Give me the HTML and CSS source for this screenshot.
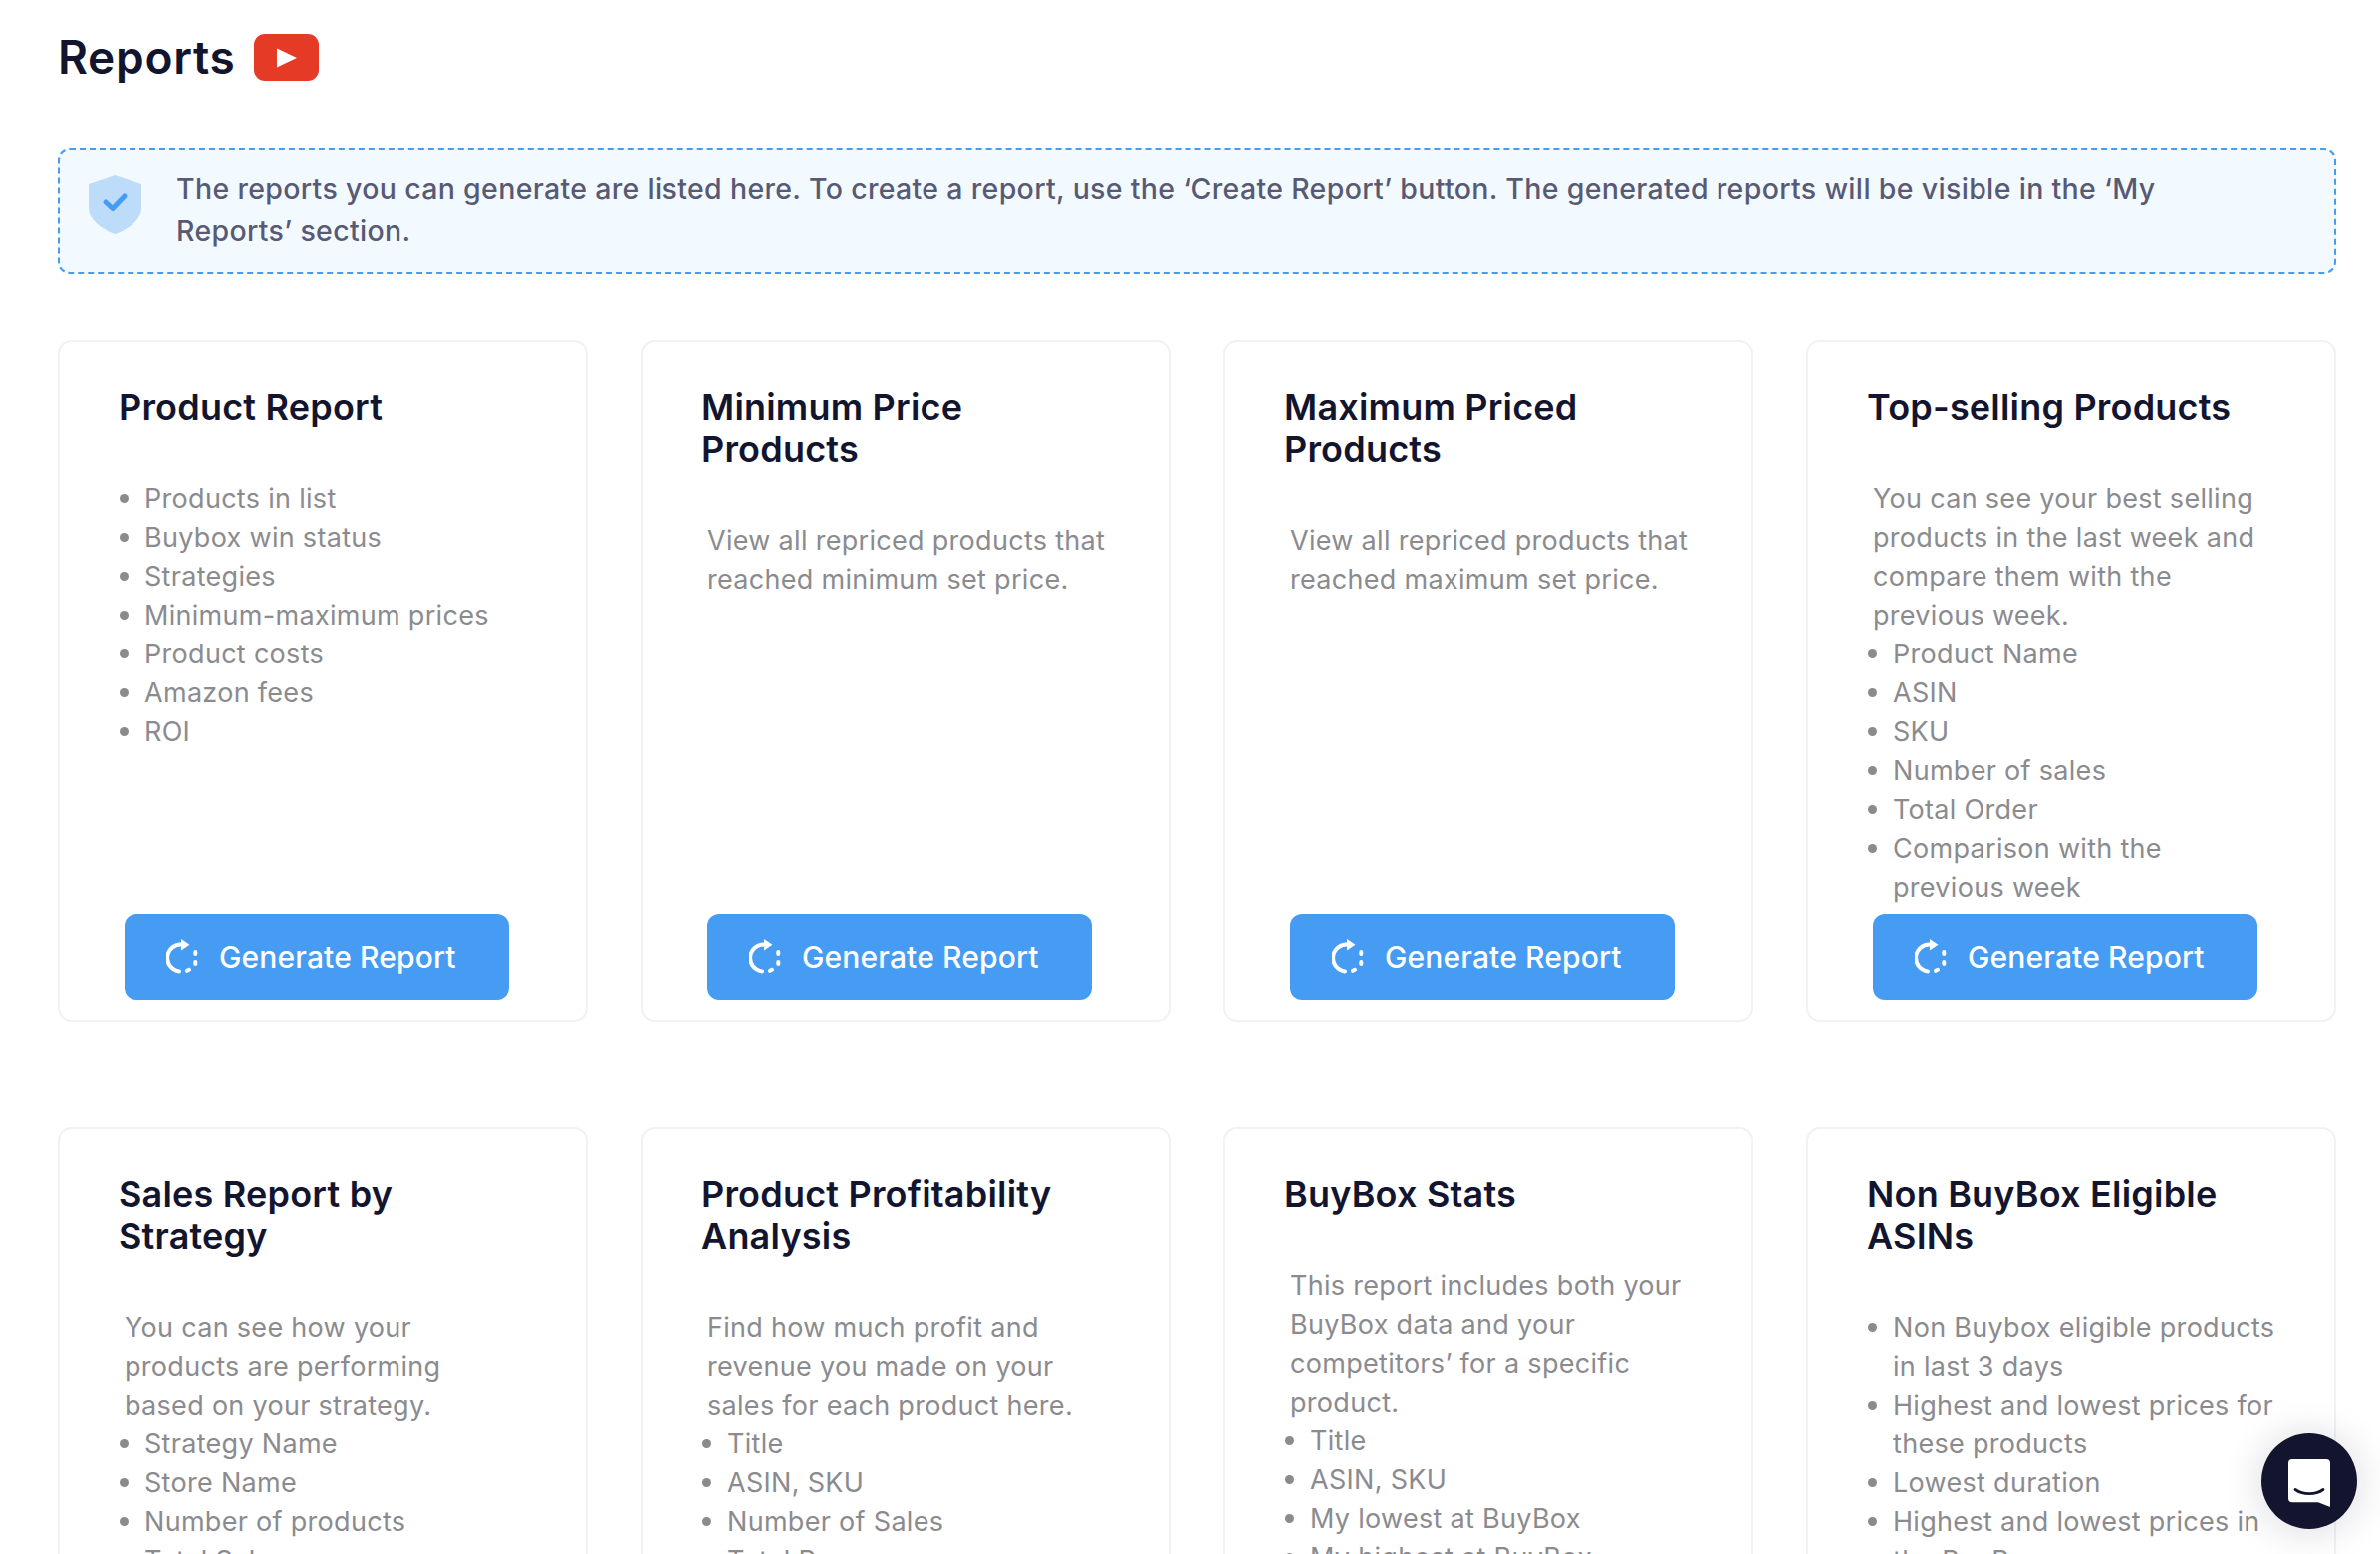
FILE: index.html
```html
<!DOCTYPE html>
<html lang="en">
<head>
<meta charset="utf-8">
<title>Reports</title>
<link rel="stylesheet" href="styles.css">
</head>
<body>
<main class="page">
  <header class="page-head">
    <h1 class="page-title">Reports</h1>
    <svg class="video-icon" viewBox="0 0 65 47" aria-hidden="true"><rect width="65" height="47" rx="11" fill="#e43a26"/><path d="M23 14.500V33.500L43 24Z" fill="#fff"/></svg>
  </header>
  <section class="notice">
    <svg class="notice-icon" viewBox="0 0 53 59" aria-hidden="true"><path d="M26.500 0L53 9V33C53 45 38 55 26.500 59C15 55 0 45 0 33V9Z" fill="#bddcfa"/><path d="M17 27L24 33.500L36 21" fill="none" stroke="#469cf2" stroke-width="5" stroke-linecap="round" stroke-linejoin="round"/></svg>
    <p class="notice-text">The reports you can generate are listed here. To create a report, use the ‘Create Report’ button. The generated reports will be visible in the ‘My<br>Reports’ section.</p>
  </section>
  <section class="grid">
    <article class="card">
      <h2 class="card-title">Product Report</h2>
      <ul class="points">
        <li>Products in list</li><li>Buybox win status</li><li>Strategies</li><li>Minimum-maximum prices</li><li>Product costs</li><li>Amazon fees</li><li>ROI</li>
      </ul>
      <button class="generate"><svg class="generate-icon" viewBox="0 0 32 36" aria-hidden="true"><path d="M15 5.500A13.500 13.500 0 0 0 13 32.400" fill="none" stroke="#fff" stroke-width="4" stroke-linecap="round"/><path d="M15 0L23.500 5.700L15 11.500Z" fill="#fff"/><path d="M29.300 13V15M29.300 23V25M21 31.800L23 30.800" fill="none" stroke="#fff" stroke-width="4" stroke-linecap="round"/></svg>Generate Report</button>
    </article>
    <article class="card">
      <h2 class="card-title">Minimum Price<br>Products</h2>
      <p class="desc">View all repriced products that<br>reached minimum set price.</p>
      <button class="generate"><svg class="generate-icon" viewBox="0 0 32 36" aria-hidden="true"><path d="M15 5.500A13.500 13.500 0 0 0 13 32.400" fill="none" stroke="#fff" stroke-width="4" stroke-linecap="round"/><path d="M15 0L23.500 5.700L15 11.500Z" fill="#fff"/><path d="M29.300 13V15M29.300 23V25M21 31.800L23 30.800" fill="none" stroke="#fff" stroke-width="4" stroke-linecap="round"/></svg>Generate Report</button>
    </article>
    <article class="card">
      <h2 class="card-title">Maximum Priced<br>Products</h2>
      <p class="desc">View all repriced products that<br>reached maximum set price.</p>
      <button class="generate"><svg class="generate-icon" viewBox="0 0 32 36" aria-hidden="true"><path d="M15 5.500A13.500 13.500 0 0 0 13 32.400" fill="none" stroke="#fff" stroke-width="4" stroke-linecap="round"/><path d="M15 0L23.500 5.700L15 11.500Z" fill="#fff"/><path d="M29.300 13V15M29.300 23V25M21 31.800L23 30.800" fill="none" stroke="#fff" stroke-width="4" stroke-linecap="round"/></svg>Generate Report</button>
    </article>
    <article class="card">
      <h2 class="card-title">Top-selling Products</h2>
      <p class="desc">You can see your best selling<br>products in the last week and<br>compare them with the<br>previous week.</p>
      <ul class="points">
        <li>Product Name</li><li>ASIN</li><li>SKU</li><li>Number of sales</li><li>Total Order</li><li>Comparison with the<br>previous week</li>
      </ul>
      <button class="generate"><svg class="generate-icon" viewBox="0 0 32 36" aria-hidden="true"><path d="M15 5.500A13.500 13.500 0 0 0 13 32.400" fill="none" stroke="#fff" stroke-width="4" stroke-linecap="round"/><path d="M15 0L23.500 5.700L15 11.500Z" fill="#fff"/><path d="M29.300 13V15M29.300 23V25M21 31.800L23 30.800" fill="none" stroke="#fff" stroke-width="4" stroke-linecap="round"/></svg>Generate Report</button>
    </article>
    <article class="card">
      <h2 class="card-title">Sales Report by<br>Strategy</h2>
      <p class="desc">You can see how your<br>products are performing<br>based on your strategy.</p>
      <ul class="points">
        <li>Strategy Name</li><li>Store Name</li><li>Number of products</li><li>Total Sales</li>
      </ul>
    </article>
    <article class="card">
      <h2 class="card-title">Product Profitability<br>Analysis</h2>
      <p class="desc">Find how much profit and<br>revenue you made on your<br>sales for each product here.</p>
      <ul class="points">
        <li>Title</li><li>ASIN, SKU</li><li>Number of Sales</li><li>Total Revenue</li>
      </ul>
    </article>
    <article class="card">
      <h2 class="card-title">BuyBox Stats</h2>
      <p class="desc">This report includes both your<br>BuyBox data and your<br>competitors’ for a specific<br>product.</p>
      <ul class="points">
        <li>Title</li><li>ASIN, SKU</li><li>My lowest at BuyBox</li><li>My highest at BuyBox</li>
      </ul>
    </article>
    <article class="card">
      <h2 class="card-title">Non BuyBox Eligible<br>ASINs</h2>
      <ul class="points">
        <li>Non Buybox eligible products<br>in last 3 days</li><li>Highest and lowest prices for<br>these products</li><li>Lowest duration</li><li>Highest and lowest prices in<br>the BuyBox</li>
      </ul>
    </article>
  </section>
</main>
<button class="chat" aria-label="Open chat"><svg class="chat-icon" viewBox="0 0 42 48" aria-hidden="true"><path d="M4 0H38A4 4 0 0 1 42 4V48L30 43.300H4A4 4 0 0 1 0 39.300V4A4 4 0 0 1 4 0Z" fill="#fff"/><path d="M7 30.500C15 36 27 36 35 30.500" fill="none" stroke="#13152f" stroke-width="2.800" stroke-linecap="round"/></svg></button>
</body>
</html>
```
FILE: styles.css
```css
* { box-sizing: border-box; }
html, body { margin: 0; height: 1560px; overflow: hidden; background: #fff; }
body { font-family: Inter, "Liberation Sans", sans-serif; color: #13152f; }
.page { padding: 33px 44px 0 58px; }
.page-head { display: flex; align-items: center; gap: 19px; height: 48px; }
.page-title { margin: 0; font-size: 46px; line-height: 48px; font-weight: 600; letter-spacing: 0.7px; }
.video-icon { width: 65px; height: 47px; flex: none; }
.notice { display: flex; align-items: flex-start; gap: 35px; margin-top: 68px; height: 126px; padding: 18px 30px 19px 29px; background: #f3faff; border: 2px dashed #469cf2; border-radius: 12px; }
.notice-icon { width: 53px; height: 59px; flex: none; margin-top: 7px; }
.notice-text { margin: 0; font-size: 28.500px; line-height: 42px; font-weight: 500; letter-spacing: 0.33px; color: #585a75; white-space: nowrap; }
.grid { display: grid; grid-template-columns: repeat(4, 532px); column-gap: 53px; row-gap: 105px; margin-top: 66px; }
.card { display: flex; flex-direction: column; padding: 45px 22px 20px 59px; background: #fff; border: 2px solid #f1f1f6; border-radius: 14px; }
.card-title { margin: 0 0 51px; font-size: 36px; line-height: 42px; font-weight: 600; letter-spacing: 0.2px; white-space: nowrap; }
.desc { margin: 0 0 0 6px; font-size: 27px; line-height: 39px; letter-spacing: 0.3px; color: #8b8b8f; white-space: nowrap; }
.points { margin: 0 0 8px; padding: 0; list-style: none; font-size: 27px; line-height: 39px; letter-spacing: 0.3px; color: #8b8b8f; white-space: nowrap; }
.points li { position: relative; padding-left: 26px; }
.points li::before { content: ""; position: absolute; left: 1px; top: 15px; width: 9px; height: 9px; border-radius: 50%; background: #8b8b8f; }
.generate { display: flex; align-items: center; gap: 21px; width: 386px; height: 86px; margin: auto 0 0 6px; padding: 0 0 0 42px; border: 0; border-radius: 12px; background: #469cf2; color: #fff; font: 500 30px/1 Inter, "Liberation Sans", sans-serif; letter-spacing: 0.15px; flex: none; }
.generate-icon { width: 32px; height: 36px; flex: none; }
.chat { position: fixed; left: 2270px; top: 1439px; display: flex; align-items: center; justify-content: center; width: 96px; height: 96px; padding: 3px 0 0; border: 0; border-radius: 50%; background: #13152f; box-shadow: 0 2px 40px rgba(19, 21, 47, 0.16); }
.chat-icon { width: 42px; height: 48px; }
```
